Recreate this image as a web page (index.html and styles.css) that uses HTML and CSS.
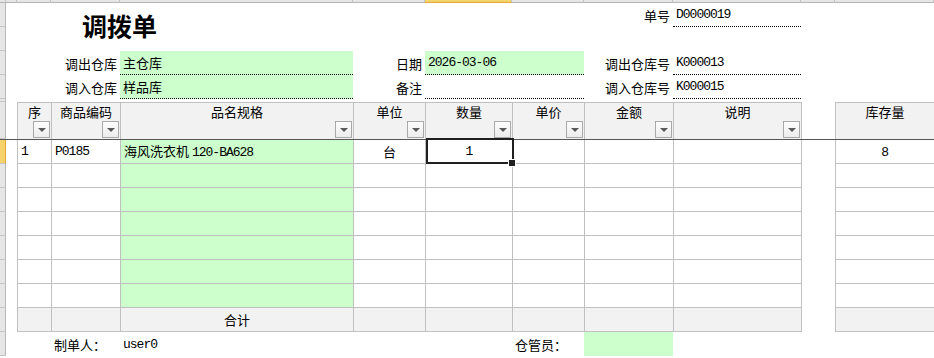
FILE: index.html
```html
<!DOCTYPE html>
<html lang="zh-CN">
<head>
    <meta charset="UTF-8">
    <title>调拨单</title>
    <link rel="stylesheet" href="styles.css">
</head>
<body>
    <div class="sheet">
        <!-- 列标题条 -->
        <div class="colhead corner"></div>
        <div class="colhead"></div>
        <div class="colhead"></div>
        <div class="colhead"></div>
        <div class="colhead"></div>
        <div class="colhead"></div>
        <div class="colhead active"></div>
        <div class="colhead"></div>
        <div class="colhead"></div>
        <div class="colhead"></div>
        <div class="colhead"></div>
        <div class="colhead"></div>

        <!-- 表头：标题、单号 -->
        <div class="rh"></div>
        <div></div>
        <div></div>
        <div class="title span2">调拨单</div>
        <div></div>
        <div></div>
        <div></div>
        <div class="label">单号</div>
        <div class="val dot"><span class="en">D0000019</span></div>
        <div></div>
        <div></div>

        <div class="rh"></div>
        <div class="span11"></div>

        <div class="rh"></div>
        <div></div>
        <div class="label span2">调出仓库</div>
        <div class="val dot g">主仓库</div>
        <div class="label">日期</div>
        <div class="val dot g span2"><span class="en">2026-03-06</span></div>
        <div class="label">调出仓库号</div>
        <div class="val dot"><span class="en">K000013</span></div>
        <div></div>
        <div></div>

        <div class="rh"></div>
        <div></div>
        <div class="label span2">调入仓库</div>
        <div class="val dot g">样品库</div>
        <div class="label">备注</div>
        <div class="val dot span2"></div>
        <div class="label">调入仓库号</div>
        <div class="val dot"><span class="en">K000015</span></div>
        <div></div>
        <div></div>

        <div class="rh"></div>
        <div class="span11"></div>

        <!-- 明细表头 -->
        <div class="rh"></div>
        <div></div>
        <div class="th"><span>序</span><i class="dd"></i></div>
        <div class="th"><span>商品编码</span><i class="dd"></i></div>
        <div class="th"><span>品名规格</span><i class="dd"></i></div>
        <div class="th"><span>单位</span><i class="dd"></i></div>
        <div class="th"><span>数量</span><i class="dd"></i></div>
        <div class="th"><span>单价</span><i class="dd"></i></div>
        <div class="th"><span>金额</span><i class="dd"></i></div>
        <div class="th"><span>说明</span><i class="dd"></i></div>
        <div class="gap"></div>
        <div class="th"><span>库存量</span></div>

        <div class="freeze"></div>

        <!-- 明细行 -->
        <div class="rh active"></div>
        <div></div>
        <div class="c"><span class="en">1</span></div>
        <div class="c"><span class="en">P0185</span></div>
        <div class="c g"><span>海风洗衣机 <span class="en">120-BA628</span></span></div>
        <div class="c mid">台</div>
        <div class="c mid cur"><span class="en">1</span></div>
        <div class="c"></div>
        <div class="c"></div>
        <div class="c"></div>
        <div class="gap"></div>
        <div class="c mid num">8</div>

        <div class="rh"></div><div></div>
        <div class="c"></div><div class="c"></div><div class="c g"></div><div class="c"></div>
        <div class="c"></div><div class="c"></div><div class="c"></div><div class="c"></div>
        <div class="gap"></div><div class="c"></div>

        <div class="rh"></div><div></div>
        <div class="c"></div><div class="c"></div><div class="c g"></div><div class="c"></div>
        <div class="c"></div><div class="c"></div><div class="c"></div><div class="c"></div>
        <div class="gap"></div><div class="c"></div>

        <div class="rh"></div><div></div>
        <div class="c"></div><div class="c"></div><div class="c g"></div><div class="c"></div>
        <div class="c"></div><div class="c"></div><div class="c"></div><div class="c"></div>
        <div class="gap"></div><div class="c"></div>

        <div class="rh"></div><div></div>
        <div class="c"></div><div class="c"></div><div class="c g"></div><div class="c"></div>
        <div class="c"></div><div class="c"></div><div class="c"></div><div class="c"></div>
        <div class="gap"></div><div class="c"></div>

        <div class="rh"></div><div></div>
        <div class="c"></div><div class="c"></div><div class="c g"></div><div class="c"></div>
        <div class="c"></div><div class="c"></div><div class="c"></div><div class="c"></div>
        <div class="gap"></div><div class="c"></div>

        <div class="rh"></div><div></div>
        <div class="c"></div><div class="c"></div><div class="c g"></div><div class="c"></div>
        <div class="c"></div><div class="c"></div><div class="c"></div><div class="c"></div>
        <div class="gap"></div><div class="c"></div>

        <!-- 合计 -->
        <div class="rh"></div><div></div>
        <div class="c tot"></div>
        <div class="c tot"></div>
        <div class="c tot mid">合计</div>
        <div class="c tot"></div>
        <div class="c tot"></div>
        <div class="c tot"></div>
        <div class="c tot"></div>
        <div class="c tot"></div>
        <div class="gap"></div>
        <div class="c tot"></div>

        <!-- 签字栏 -->
        <div class="rh"></div>
        <div></div>
        <div></div>
        <div class="val">制单人：</div>
        <div class="val"><span class="en">user0</span></div>
        <div></div>
        <div></div>
        <div class="val">仓管员：</div>
        <div class="g"></div>
        <div></div>
        <div></div>
        <div></div>
    </div>
</body>
</html>
```

FILE: styles.css
```css
:root {
    --grid-line: #c0c0c0;
    --head-bg: #f2f2f2;
    --input-bg: #ccffcc;
    --chrome-bg: #e6e6e6;
    --chrome-line: #c4c4c4;
    --chrome-sel: #f6d36a;
}

* {
    margin: 0;
    padding: 0;
    box-sizing: border-box;
}

body {
    background: #fff;
    color: #000;
    font-family: "Noto Sans CJK SC", sans-serif;
    font-size: 13px;
    overflow: hidden;
}

.sheet {
    display: grid;
    grid-template-columns: 6px 11px 34px 69px 233px 72px 87px 72px 89px 128px 34px 99px;
    grid-template-rows: 3px 24px 24px 24px 24px 3px 37px 1px repeat(8, 24px) 24px;
    width: 934px;
}

.sheet > div {
    display: flex;
    align-items: center;
    white-space: pre;
    line-height: 17px;
}

.span2 { grid-column: span 2; }
.span11 { grid-column: span 11; }

/* 西文字符用等宽字体，收紧到半角宽度 */
.en {
    font-family: "Liberation Mono", monospace;
    font-size: 13px;
    letter-spacing: -1px;
}

.num {
    font-family: "Liberation Sans", sans-serif;
}

/* 行列标题 */
.colhead {
    background: var(--chrome-bg);
    border-right: 1px solid var(--chrome-line);
    border-bottom: 1px solid #b4b4b4;
}

.colhead.active {
    background: var(--chrome-sel);
    border-bottom-color: #e2a93a;
}

.rh {
    background: var(--chrome-bg);
    border-right: 1px solid #b8b8b8;
    border-bottom: 1px solid var(--chrome-line);
}

.rh.active {
    background: var(--chrome-sel);
    border-right-color: #e2a93a;
}

.freeze {
    grid-column: 1 / -1;
    background: #555;
}

/* 表头部分 */
.title {
    align-self: start;
    padding: 10px 0 0 31px;
    font-size: 25px;
    font-weight: 700;
    line-height: 25px !important;
}

.label {
    justify-content: flex-end;
    padding-right: 3px;
}

.val {
    padding-left: 3px;
}

.dot {
    border-bottom: 1px dotted #000;
}

.g {
    background: var(--input-bg);
}

/* 明细表 */
.th {
    flex-direction: column;
    align-items: center !important;
    border-left: 1px solid var(--grid-line);
    border-top: 1px solid var(--grid-line);
    background: var(--head-bg);
}

.th span {
    line-height: 17px;
}

.dd {
    align-self: flex-end;
    margin: auto 1px 1px 0;
    width: 17px;
    height: 17px;
    border: 1px solid #a8a8a8;
    background: linear-gradient(#fdfdfd, #ececec);
    display: flex;
    align-items: center;
    justify-content: center;
}

.dd::after {
    content: "";
    border-left: 4px solid transparent;
    border-right: 4px solid transparent;
    border-top: 4px solid #5a5a5a;
}

.c {
    border-left: 1px solid var(--grid-line);
    border-bottom: 1px solid var(--grid-line);
    padding-left: 3px;
}

.gap {
    border-left: 1px solid var(--grid-line);
}

.mid {
    justify-content: center;
    padding-left: 0 !important;
}

.tot {
    background: var(--head-bg);
}

/* 当前选中单元格 */
.cur {
    position: relative;
}

.cur::before {
    content: "";
    position: absolute;
    top: -2px;
    left: 0;
    right: -2px;
    bottom: -1px;
    border: 2px solid #1f1f1f;
    z-index: 1;
}

.cur::after {
    content: "";
    position: absolute;
    right: -4px;
    bottom: -4px;
    width: 6px;
    height: 6px;
    background: #1f1f1f;
    border: 1px solid #fff;
    z-index: 2;
}
```
